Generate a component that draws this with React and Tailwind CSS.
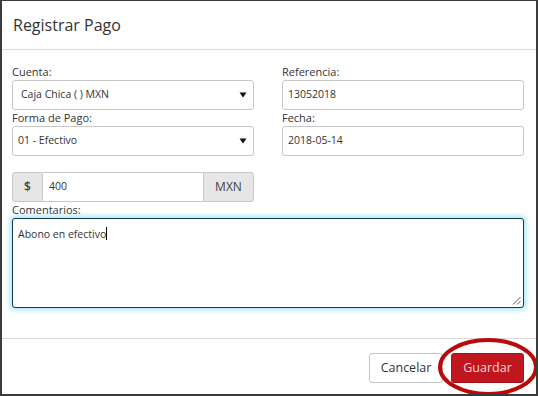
import React from 'react';

const Label = ({ children }) => (
  <div className="h-[16px] text-[11px] leading-[16px] text-[#333]">{children}</div>
);

const Caret = () => (
  <svg width="8" height="6" viewBox="0 0 8 6" className="shrink-0">
    <path d="M0.5 0.5 L7.5 0.5 L4 5.5 Z" fill="#111" />
  </svg>
);

const SelectBox = ({ value, pad = 'pl-[8px]' }) => (
  <div className={`flex h-[30px] items-center justify-between rounded-[3px] border border-[#c8c8c8] bg-white ${pad} pr-[6px]`}>
    <span className="text-[10.5px] text-[#333]">{value}</span>
    <Caret />
  </div>
);

const TextBox = ({ value }) => (
  <div className="flex h-[30px] items-center rounded-[3px] border border-[#c8c8c8] bg-white pl-[5px] text-[10.5px] text-[#333]">
    {value}
  </div>
);

export default function App() {
  return (
    <div className="relative flex h-[396px] w-[538px] flex-col overflow-hidden border-x-2 border-b-2 border-t border-[#3b3b3b] bg-white font-['Open_Sans',sans-serif] text-[#333]">
      <div className="flex h-[49px] shrink-0 items-center border-b border-[#dadada] pl-[11px]">
        <span className="text-[16px] text-[#333]">Registrar Pago</span>
      </div>

      <div className="flex-1 pl-[10px] pr-[12px] pt-[14px]">
        <div className="grid grid-cols-2 gap-x-[28px]">
          <div>
            <Label>Cuenta:</Label>
            <SelectBox value="Caja Chica ( ) MXN" pad="pl-[8px]" />
            <Label>Forma de Pago:</Label>
            <SelectBox value="01 - Efectivo" pad="pl-[5px]" />
          </div>
          <div>
            <Label>Referencia:</Label>
            <TextBox value="13052018" />
            <Label>Fecha:</Label>
            <TextBox value="2018-05-14" />
          </div>
        </div>

        <div className="mt-[16px] flex h-[30px] w-[242px]">
          <div className="flex w-[31px] items-center justify-center rounded-l-[3px] border border-[#c8c8c8] bg-[#e6e6e6] text-[12px] font-semibold text-[#444]">
            $
          </div>
          <div className="flex flex-1 items-center border-y border-[#c8c8c8] bg-white pl-[6px] text-[10.5px]">
            400
          </div>
          <div className="flex w-[51px] items-center justify-center rounded-r-[3px] border border-[#c8c8c8] bg-[#e6e6e6] text-[12px] text-[#444]">
            MXN
          </div>
        </div>

        <Label>Comentarios:</Label>
        <div className="relative h-[90px] rounded-[3px] border border-[#163944] bg-white px-[5px] pt-[6px] text-[10.5px] leading-[16px] shadow-[0_0_5px_2px_rgba(110,215,250,0.65)]">
          <span>Abono en efectivo</span>
          <span className="inline-block h-[13px] w-px translate-y-[2px] bg-black" />
          <svg width="9" height="9" viewBox="0 0 9 9" className="absolute bottom-[2px] right-[2px]">
            <path d="M8.5 1 L1 8.5 M8.5 5 L5 8.5" stroke="#555" strokeWidth="1" />
          </svg>
        </div>
      </div>

      <div className="flex h-[56px] shrink-0 justify-end gap-[8px] border-t border-[#dadada] pr-[12px] pt-[14px]">
        <button className="h-[30px] w-[74px] rounded-[3px] border border-[#c4c4c4] bg-white text-[12.5px] text-[#333]">
          Cancelar
        </button>
        <button className="h-[30px] w-[73px] rounded-[3px] border border-[#a8121a] bg-[#c0161f] text-[12.5px] text-[#f7d3d3]">
          Guardar
        </button>
      </div>

      <svg
        width="110"
        height="70"
        viewBox="0 0 110 70"
        className="pointer-events-none absolute left-[430px] top-[332px]"
      >
        <ellipse cx="56" cy="34" rx="48" ry="27" fill="none" stroke="#b80a0a" strokeWidth="4" />
      </svg>
    </div>
  );
}
